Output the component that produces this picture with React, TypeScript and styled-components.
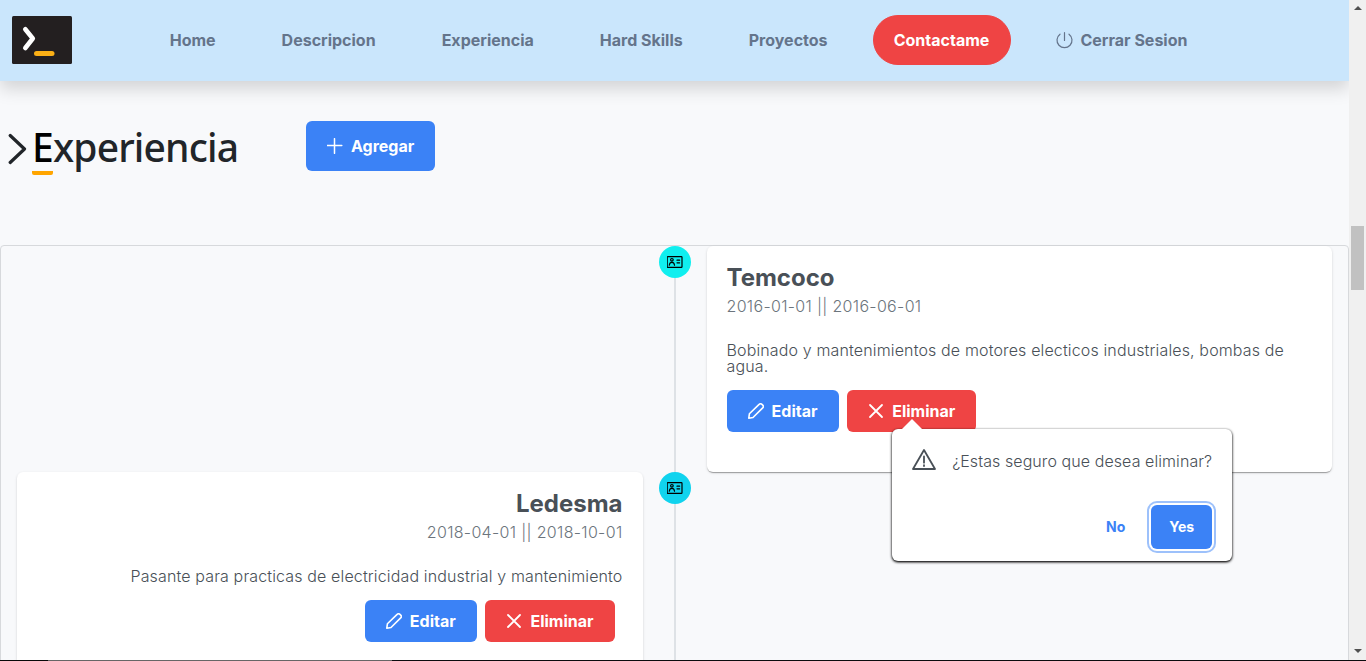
import React from "react";
import styled, { createGlobalStyle } from "styled-components";

const Global = createGlobalStyle`
  * { box-sizing: border-box; }
  html, body { margin: 0; padding: 0; overflow: hidden; background: #f8f9fb; }
  body { font-family: Inter, "Liberation Sans", sans-serif; font-size: 16px; color: #495057; }
  button { font-family: inherit; cursor: pointer; }
`;

const Screen = styled.div`
  display: flex;
  flex-direction: column;
  height: 661px;
  overflow: hidden;
`;
const Viewport = styled.div`
  display: flex;
  flex: 1;
  min-height: 0;
`;
const Page = styled.main`
  display: flex;
  flex-direction: column;
  width: 1349px;
  overflow: hidden;
  background: #f8f9fb;
`;

const Header = styled.header`
  display: flex;
  align-items: center;
  flex: none;
  height: 81px;
  padding: 0 12px 1px;
  background: #cae6fc;
  box-shadow: 0 8px 16px rgba(0, 0, 0, 0.15);
`;
const Logo = styled.svg`
  width: 60px;
  height: 48px;
  margin-right: 76.7px;
`;
const Nav = styled.nav`
  display: flex;
  gap: 24px;
`;
const NavButton = styled.button<{ $filled?: boolean }>`
  display: flex;
  align-items: center;
  gap: 8px;
  height: 50px;
  padding: 0 ${(p) => (p.$filled ? 20.2 : 20)}px;
  border: 1px solid ${(p) => (p.$filled ? "#ef4444" : "transparent")};
  border-radius: 32px;
  background: ${(p) => (p.$filled ? "#ef4444" : "transparent")};
  color: ${(p) => (p.$filled ? "#fff" : "#64748b")};
  font-size: 16px;
  font-weight: 700;
  white-space: nowrap;
`;

const SectionHead = styled.section`
  display: flex;
  align-items: flex-start;
  flex: none;
  height: 164px;
  padding: 40px 0 0 8px;
`;
const Title = styled.h1`
  display: flex;
  align-items: flex-start;
  width: 298px;
  margin: 0;
  color: #212529;
  font: 500 39px/52px "Noto Sans", "Open Sans", sans-serif;
`;
const Chevron = styled.svg`
  width: 20px;
  height: 32px;
  margin: 12px 4px 0 0;
`;
const Initial = styled.span`
  width: 21px;
  height: 54px;
  border-bottom: 4px solid orange;
  border-radius: 2px;
  color: #000;
`;
const Rest = styled.span`
  letter-spacing: -0.85px;
`;
const ActionButton = styled.button<{ $danger?: boolean; $tall?: boolean }>`
  display: flex;
  align-items: center;
  gap: 8px;
  height: ${(p) => (p.$tall ? 50 : 42)}px;
  padding: 0 ${(p) => (p.$tall || p.$danger ? "21px" : "21.7px 0 21.1px")};
  border: 0;
  border-radius: 6px;
  background: ${(p) => (p.$danger ? "#ef4444" : "#3b82f6")};
  color: #fff;
  font-size: 16px;
  font-weight: 700;
`;

const Timeline = styled.section`
  display: flex;
  flex-direction: column;
  flex: none;
  height: 520px;
  border: 1px solid #d7d9dc;
  border-radius: 4px;
`;
const Event = styled.article<{ $reverse?: boolean }>`
  display: flex;
  flex: none;
  flex-direction: ${(p) => (p.$reverse ? "row-reverse" : "row")};
  text-align: ${(p) => (p.$reverse ? "right" : "left")};
`;
const Side = styled.div`
  flex: 1;
  padding: 0 16px;
`;
const Rail = styled.div`
  display: flex;
  flex-direction: column;
  align-items: center;
  width: 32px;
`;
const Marker = styled.span<{ $color: string }>`
  display: flex;
  align-items: center;
  justify-content: center;
  width: 32px;
  height: 32px;
  border-radius: 50%;
  background: ${(p) => p.$color};
`;
const Line = styled.div`
  flex: 1;
  width: 2px;
  background: #dee2e6;
`;
const Card = styled.div`
  padding: 20px 20px 40px;
  border-radius: 6px;
  background: #fff;
  box-shadow: 0 2px 1px -1px rgba(0, 0, 0, 0.2), 0 1px 1px rgba(0, 0, 0, 0.14), 0 1px 3px rgba(0, 0, 0, 0.12);
`;
const Company = styled.h2`
  margin: 0 0 8px;
  font-size: 24px;
  line-height: 24px;
  font-weight: 700;
`;
const Dates = styled.p`
  margin: 0 0 28px;
  color: #6c757d;
  font-size: 16px;
  line-height: 16px;
  font-weight: 330;
  letter-spacing: 0.32px;
`;
const Description = styled.p`
  margin: 0 0 16px;
  font-size: 16px;
  line-height: 16px;
  font-weight: 330;
  letter-spacing: 0.14px;
`;
const Actions = styled.div<{ $end?: boolean }>`
  display: flex;
  gap: 8px;
  justify-content: ${(p) => (p.$end ? "flex-end" : "flex-start")};
  padding-right: ${(p) => (p.$end ? 8 : 0)}px;
`;
const Anchor = styled.div`
  position: relative;
`;

const Popup = styled.div`
  position: absolute;
  z-index: 2;
  top: 39px;
  left: 45px;
  width: 340px;
  height: 132px;
  padding: 20px 20px 12px;
  display: flex;
  flex-direction: column;
  justify-content: space-between;
  border-radius: 6px;
  background: #fff;
  box-shadow: 0 1px 3px #000, 0 1px 2px rgba(0, 0, 0, 0.5);
  &::before {
    content: "";
    position: absolute;
    top: -10px;
    left: 10px;
    border: 10px solid transparent;
    border-top: 0;
    border-bottom-color: #fff;
  }
`;
const Message = styled.div`
  display: flex;
  align-items: center;
  gap: 16px;
  height: 24px;
  font-size: 16px;
  font-weight: 330;
  letter-spacing: 0.08px;
  white-space: nowrap;
`;
const PopupActions = styled.div`
  display: flex;
  justify-content: flex-end;
  gap: 8px;
`;
const ConfirmButton = styled.button<{ $primary?: boolean }>`
  height: 44px;
  padding: 0 18px 1px;
  border: 0;
  border-radius: 6px;
  background: ${(p) => (p.$primary ? "#3b82f6" : "transparent")};
  color: ${(p) => (p.$primary ? "#fff" : "#3b82f6")};
  box-shadow: ${(p) => (p.$primary ? "0 0 0 2px #fff, 0 0 0 4px #9dc1fb" : "none")};
  font-size: 14px;
  font-weight: 700;
`;

const Scrollbar = styled.aside`
  display: flex;
  flex-direction: column;
  align-items: center;
  justify-content: space-between;
  width: 17px;
  padding: 6px 0 7px;
  background: #f0f0f0;
`;
const Thumb = styled.div`
  width: 13px;
  height: 64px;
  margin: 216px 0 auto;
  background: #c1c1c1;
`;
const Arrow = styled.div<{ $down?: boolean }>`
  border: 4px solid transparent;
  border-top: ${(p) => (p.$down ? "4px solid #505050" : "0")};
  border-bottom: ${(p) => (p.$down ? "0" : "4px solid #505050")};
`;
const BottomEdge = styled.footer`
  height: 1px;
  background: linear-gradient(90deg, #080808 48px, #666 48px 392px, #0b0b0e 392px);
`;

const Icon = styled.svg`
  flex: none;
  fill: none;
  stroke: currentColor;
  stroke-linecap: round;
  stroke-linejoin: round;
`;

const PowerIcon = () => (
  <Icon width="17" height="17" viewBox="0 0 17 17" strokeWidth="1.2">
    <path d="M8.5 .7v7.7M4 2.2a7.5 7.5 0 1 0 9 0" />
  </Icon>
);
const PlusIcon = () => (
  <Icon width="16" height="16" viewBox="0 0 16 16" strokeWidth="1.5">
    <path d="M7.5 .7v14.6M.2 7.5h14.6" />
  </Icon>
);
const PencilIcon = () => (
  <Icon width="16" height="16" viewBox="0 0 16 16" strokeWidth="1.6">
    <path d="M.8 15.2l.6-4.4L11.1 1.4a2 2 0 0 1 2.9 0l.7.7a2 2 0 0 1 0 2.8L5 14.5z" />
  </Icon>
);
const TimesIcon = () => (
  <Icon width="16" height="16" viewBox="0 0 16 16" strokeWidth="1.8">
    <path d="M2 2l12 12M14 2L2 14" />
  </Icon>
);
const IdCardIcon = () => (
  <Icon width="16" height="16" viewBox="0 0 16 16" strokeWidth="1.2" color="#000">
    <rect x=".2" y="2.6" width="14.8" height="10.8" rx=".7" />
    <circle cx="4.9" cy="5.8" r="1.3" />
    <path d="M2.3 11.2c.2-1.9 1.1-2.9 2.6-2.9s2.4 1 2.6 2.9M10 6.2h2.6M10 8.8h2.6" />
  </Icon>
);
const WarningIcon = () => (
  <Icon width="24" height="24" viewBox="0 0 24 24" strokeWidth="1.8">
    <path d="M12 1L23 20H1zM12 7.5v6.2M12 16.2v.8" />
  </Icon>
);

type Job = {
  company: string;
  dates: string;
  text: string;
  color: string;
  reverse?: boolean;
  confirming?: boolean;
};

const jobs: Job[] = [
  {
    company: "Temcoco",
    dates: "2016-01-01 || 2016-06-01",
    text: "Bobinado y mantenimientos de motores electicos industriales, bombas de agua.",
    color: "#10efef",
    confirming: true,
  },
  {
    company: "Ledesma",
    dates: "2018-04-01 || 2018-10-01",
    text: "Pasante para practicas de electricidad industrial y mantenimiento",
    color: "#10d3ee",
    reverse: true,
  },
];

const ConfirmPopup = () => (
  <Popup role="alertdialog">
    <Message>
      <WarningIcon />
      <span>¿Estas seguro que desea eliminar?</span>
    </Message>
    <PopupActions>
      <ConfirmButton>No</ConfirmButton>
      <ConfirmButton $primary>Yes</ConfirmButton>
    </PopupActions>
  </Popup>
);

const TimelineEvent = ({ job }: { job: Job }) => (
  <Event $reverse={job.reverse}>
    <Side />
    <Rail>
      <Marker $color={job.color}>
        <IdCardIcon />
      </Marker>
      <Line />
    </Rail>
    <Side>
      <Card>
        <Company>{job.company}</Company>
        <Dates>{job.dates}</Dates>
        <Description>{job.text}</Description>
        <Actions $end={job.reverse}>
          <ActionButton>
            <PencilIcon />
            Editar
          </ActionButton>
          <Anchor>
            <ActionButton $danger>
              <TimesIcon />
              Eliminar
            </ActionButton>
            {job.confirming && <ConfirmPopup />}
          </Anchor>
        </Actions>
      </Card>
    </Side>
  </Event>
);

export default function App() {
  return (
    <Screen>
      <Global />
      <Viewport>
        <Page>
          <Header>
            <Logo viewBox="0 0 60 48">
              <rect width="60" height="48" rx="1.5" fill="#231f20" />
              <path d="M13.3 13.2L20.8 22.5L13.3 32" fill="none" stroke="#fff" strokeWidth="4.6" strokeLinecap="round" strokeLinejoin="round" />
              <rect x="22" y="35" width="20.5" height="5" rx="2.5" fill="#fbb016" />
            </Logo>
            <Nav>
              <NavButton>Home</NavButton>
              <NavButton>Descripcion</NavButton>
              <NavButton>Experiencia</NavButton>
              <NavButton>Hard Skills</NavButton>
              <NavButton>Proyectos</NavButton>
              <NavButton $filled>Contactame</NavButton>
              <NavButton>
                <PowerIcon />
                Cerrar Sesion
              </NavButton>
            </Nav>
          </Header>
          <SectionHead>
            <Title>
              <Chevron viewBox="0 0 20 32">
                <path d="M2.2 2.5L16.5 16L2.2 29.5" fill="none" stroke="#212529" strokeWidth="3.2" strokeLinecap="round" strokeLinejoin="round" />
              </Chevron>
              <Initial>E</Initial>
              <Rest>xperiencia</Rest>
            </Title>
            <ActionButton $tall>
              <PlusIcon />
              Agregar
            </ActionButton>
          </SectionHead>
          <Timeline>
            {jobs.map((job) => (
              <TimelineEvent key={job.company} job={job} />
            ))}
          </Timeline>
        </Page>
        <Scrollbar>
          <Arrow />
          <Thumb />
          <Arrow $down />
        </Scrollbar>
      </Viewport>
      <BottomEdge />
    </Screen>
  );
}
